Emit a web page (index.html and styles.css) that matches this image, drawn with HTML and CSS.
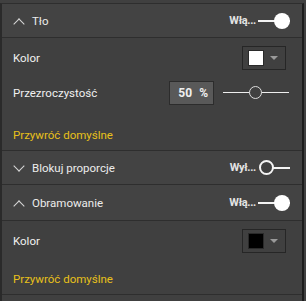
FILE: index.html
```html
<!DOCTYPE html>
<html lang="pl">
<head>
    <meta charset="UTF-8">
    <title>Format</title>
    <link rel="stylesheet" href="styles.css">
</head>
<body>
    <div class="panel">
        <div class="card-head">
            <span class="chevron up"></span>
            <span class="card-title">Tło</span>
            <div class="toggle on">
                <span class="toggle-label">Włą...</span>
                <span class="track"><span class="knob"></span></span>
            </div>
        </div>
        <div class="card-body">
            <div class="row">
                <span class="label">Kolor</span>
                <div class="swatch"><span class="chip white"></span><span class="caret"></span></div>
            </div>
            <div class="row slim">
                <span class="label">Przezroczystość</span>
                <div class="num-box"><span>50</span><span>%</span></div>
                <div class="slider"><span class="slider-knob"></span></div>
            </div>
            <div class="reset first">Przywróć domyślne</div>
        </div>

        <div class="card-head">
            <span class="chevron down"></span>
            <span class="card-title">Blokuj proporcje</span>
            <div class="toggle off">
                <span class="toggle-label">Wył...</span>
                <span class="track"><span class="knob"></span></span>
            </div>
        </div>

        <div class="card-head tall">
            <span class="chevron up"></span>
            <span class="card-title">Obramowanie</span>
            <div class="toggle on">
                <span class="toggle-label">Włą...</span>
                <span class="track"><span class="knob"></span></span>
            </div>
        </div>
        <div class="card-body">
            <div class="row">
                <span class="label">Kolor</span>
                <div class="swatch"><span class="chip black"></span><span class="caret"></span></div>
            </div>
            <div class="reset">Przywróć domyślne</div>
        </div>
    </div>
</body>
</html>
```

FILE: styles.css
```css
* {
    margin: 0;
    padding: 0;
    box-sizing: border-box;
}

body {
    background: #404040;
    font-family: 'Roboto', sans-serif;
    font-size: 11.5px;
    color: #f0f0f0;
    padding-top: 3px;
    height: 301px;
    overflow: hidden;
}

.panel {
    width: 304px;
    border-left: 2px solid #2a2a2a;
    border-right: 2px solid #1c1c1c;
    border-top: 1px solid #2e2e2e;
    background: #404040;
    height: 298px;
}

.card-head {
    height: 34px;
    display: flex;
    align-items: center;
    padding: 0 12px 0 10px;
    background: #434343;
    border-bottom: 1px solid #2e2e2e;
}

.card-head.tall {
    height: 36px;
}

.chevron {
    width: 8px;
    height: 8px;
    border-left: 1px solid #d8d8d8;
    border-top: 1px solid #d8d8d8;
    margin: 0 9px 0 3px;
}

.chevron.up {
    transform: rotate(45deg);
    margin-top: 6px;
}

.chevron.down {
    transform: rotate(225deg);
    margin-top: -4px;
}

.card-title {
    flex: 1;
    color: #ececec;
}

.toggle {
    display: flex;
    align-items: center;
}

.toggle-label {
    font-weight: 700;
    font-size: 11px;
    letter-spacing: -0.3px;
    color: #e4e4e4;
}

.track {
    position: relative;
    width: 32px;
    height: 16px;
    margin-left: 2px;
}

.track::before {
    content: '';
    position: absolute;
    left: 0;
    right: 0;
    top: 7px;
    height: 2px;
    background: #f4f4f4;
}

.knob {
    position: absolute;
    top: 0;
    width: 16px;
    height: 16px;
    border-radius: 50%;
    background: #fff;
}

.toggle.on .knob {
    right: 0;
}

.toggle.off .track::before {
    left: 14px;
}

.toggle.off .knob {
    left: 1px;
    width: 15px;
    height: 15px;
    background: #404040;
    border: 2px solid #f4f4f4;
}

.card-body {
    border-bottom: 1px solid #2e2e2e;
    padding: 0 12px 0 11px;
}

.row {
    height: 40px;
    display: flex;
    align-items: center;
}

.row.slim {
    height: 30px;
}

.label {
    flex: 1;
}

.swatch {
    width: 44px;
    height: 24px;
    border: 1px solid #262626;
    display: flex;
    align-items: center;
    padding-left: 5px;
    margin-right: 4px;
}

.chip {
    width: 16px;
    height: 16px;
    border: 1px solid #2a2a2a;
}

.chip.white {
    background: #ffffff;
}

.chip.black {
    background: #000000;
}

.caret {
    margin-left: 6px;
    width: 0;
    height: 0;
    border-left: 4px solid transparent;
    border-right: 4px solid transparent;
    border-top: 4px solid #9a9a9a;
}

.num-box {
    width: 45px;
    height: 24px;
    background: #595959;
    border: 1px solid #2c2c2c;
    display: flex;
    align-items: center;
    justify-content: flex-end;
    gap: 7px;
    padding-right: 5px;
    font-weight: 700;
    font-size: 12px;
}

.slider {
    position: relative;
    width: 66px;
    height: 14px;
    margin: 0 1px 0 9px;
}

.slider::before {
    content: '';
    position: absolute;
    left: 0;
    right: 0;
    top: 6px;
    height: 1px;
    background: #eeeeee;
}

.slider-knob {
    position: absolute;
    left: 26px;
    top: 0;
    width: 13px;
    height: 13px;
    border-radius: 50%;
    border: 1px solid #dcdcdc;
    background: #404040;
}

.reset {
    color: #e8c11a;
    padding: 10px 0 7px;
    line-height: 16px;
}

.reset.first {
    padding-top: 19px;
    padding-bottom: 7px;
}
```
